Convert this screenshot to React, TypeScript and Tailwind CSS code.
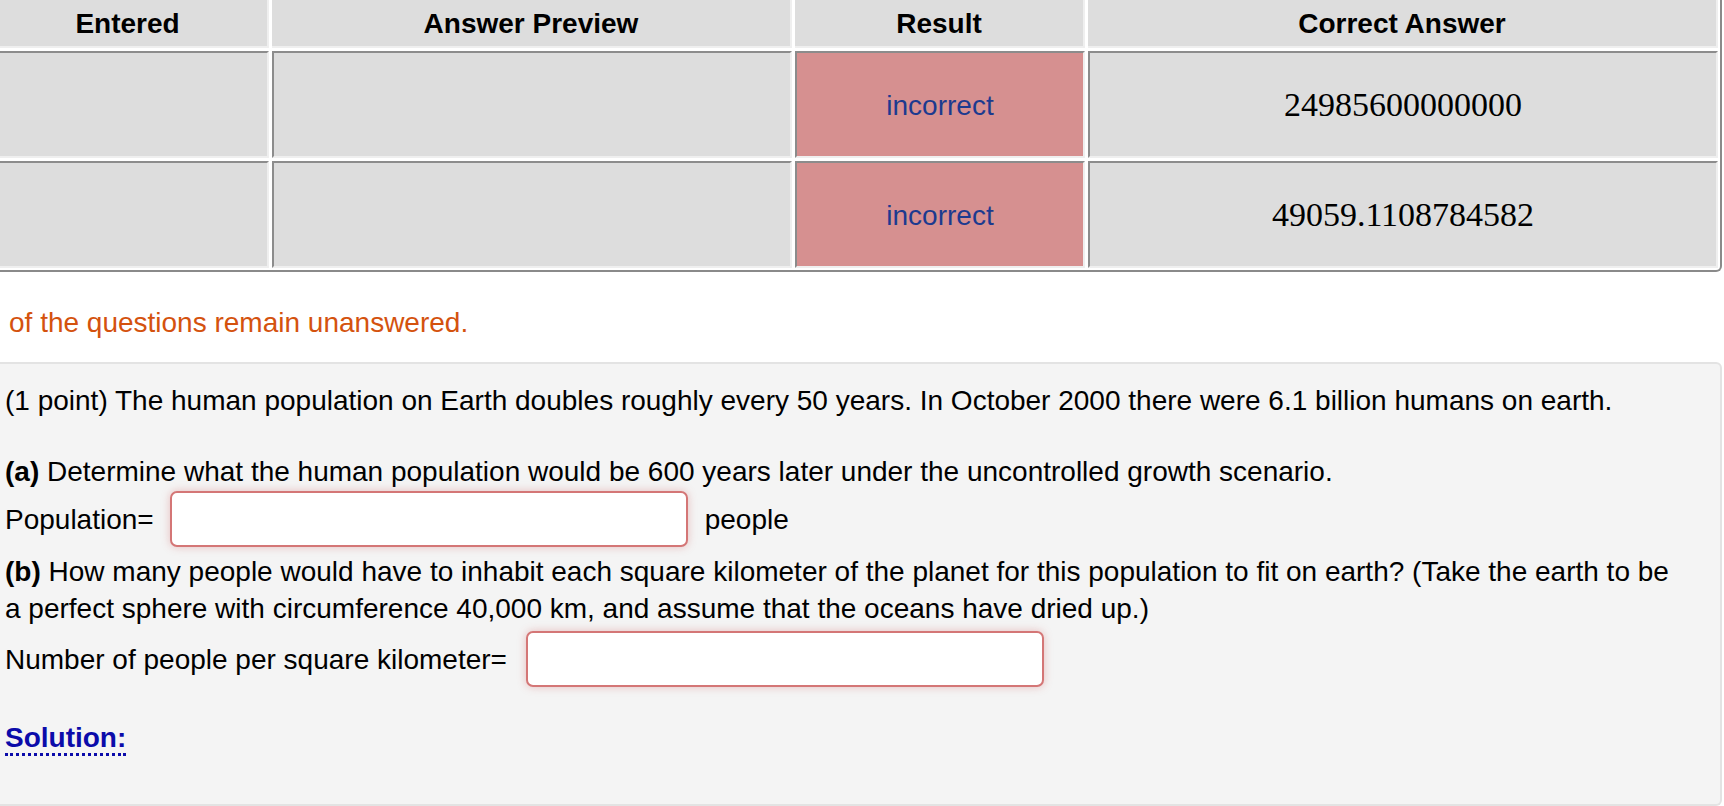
import React from 'react';

const rows = [
  { entered: '', preview: '', result: 'incorrect', correct: '24985600000000' },
  { entered: '', preview: '', result: 'incorrect', correct: '49059.1108784582' },
];

const cellBase =
  'flex items-center justify-center border-2 border-t-[#8c8c8c] border-l-[#8c8c8c] border-b-[#efefef] border-r-[#efefef]';

function HeaderCell({ children }: { children: React.ReactNode }) {
  return (
    <div className="flex items-center justify-center border-b-2 border-r-2 border-[#efefef] bg-[#dddddd] pt-[1px] text-[28px] font-bold leading-[32px] text-black">
      {children}
    </div>
  );
}

function AnswerInput({ className = '' }: { className?: string }) {
  return (
    <input
      type="text"
      className={`h-[56px] w-[518px] rounded-[7px] border-2 border-[#d47676] bg-white shadow-[0_0_9px_rgba(205,90,90,0.35)] outline-none ${className}`}
    />
  );
}

export default function App() {
  return (
    <div
      className="h-[806px] w-[1724px] overflow-hidden bg-white text-black"
      style={{ fontFamily: '"Liberation Sans", Arial, Helvetica, sans-serif' }}
    >
      {/* Attempt results table */}
      <div className="-ml-[12px] mr-[2px] rounded-br-[6px] border-b-2 border-r-2 border-[#8a8a8a] bg-white pb-[2px] pr-[2px]">
        <div className="grid grid-cols-[281px_520px_290px_1fr] grid-rows-[48px_107px_107px] gap-[3px]">
          <HeaderCell>Entered</HeaderCell>
          <HeaderCell>Answer Preview</HeaderCell>
          <HeaderCell>Result</HeaderCell>
          <HeaderCell>Correct Answer</HeaderCell>
          {rows.map((row, i) => (
            <React.Fragment key={i}>
              <div className={`${cellBase} bg-[#dddddd]`}>{row.entered}</div>
              <div className={`${cellBase} bg-[#dddddd]`}>{row.preview}</div>
              <div className={`${cellBase} bg-[#d69090] pt-[2px] text-[28px] text-[#1c3a8f]`}>{row.result}</div>
              <div
                className={`${cellBase} bg-[#dddddd] text-[34px] text-black`}
                style={{ fontFamily: '"Liberation Serif", "Times New Roman", serif' }}
              >
                {row.correct}
              </div>
            </React.Fragment>
          ))}
        </div>
      </div>

      <p className="mt-[32px] pl-[9px] text-[28px] leading-[37px] text-[#d4520e]">
        of the questions remain unanswered.
      </p>

      {/* Problem body */}
      <div className="mr-[2px] mt-[21px] h-[444px] rounded-r-[6px] border-2 border-l-0 border-[#e3e3e3] bg-[#f4f4f4] pl-[5px] pt-[18px] text-[28px] leading-[37px]">
        <p>
          (1 point) The human population on Earth doubles roughly every 50 years. In October 2000 there were 6.1 billion
          humans on earth.
        </p>
        <p className="mt-[34px]">
          <b>(a)</b> Determine what the human population would be 600 years later under the uncontrolled growth scenario.
        </p>
        <div className="flex h-[58px] items-center">
          <span>Population=</span>
          <AnswerInput className="ml-[16px]" />
          <span className="ml-[17px]">people</span>
        </div>
        <p className="mt-[5px] pr-[30px]">
          <b>(b)</b> How many people would have to inhabit each square kilometer of the planet for this population to fit
          on earth? (Take the earth to be a perfect sphere with circumference 40,000 km, and assume that the oceans have
          dried up.)
        </p>
        <div className="mt-[2px] flex h-[60px] items-center">
          <span>Number of people per square kilometer=</span>
          <AnswerInput className="ml-[19px]" />
        </div>
        <div className="mt-[30px]">
          <span className="border-b-[3px] border-dotted border-[#0b0baa] font-bold text-[#0b0baa]">Solution:</span>
        </div>
      </div>
    </div>
  );
}
